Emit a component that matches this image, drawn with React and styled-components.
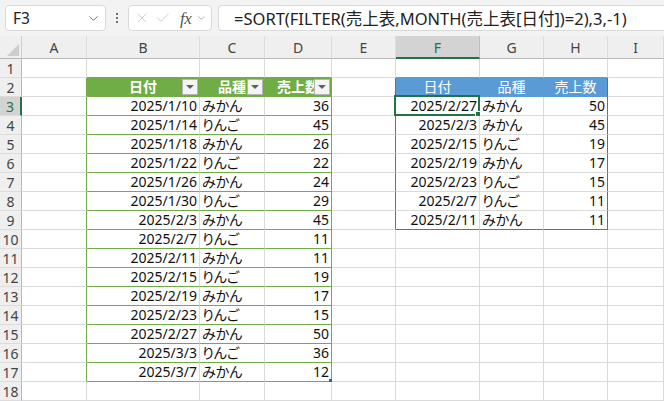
import { Fragment } from "react";
import styled, { createGlobalStyle } from "styled-components";
import { ChevronDown, X, Check } from "lucide-react";

const GlobalStyle = createGlobalStyle`
  html, body {
    margin: 0;
    padding: 0;
    background: #ffffff;
    overflow: hidden;
  }
  body {
    font-family: "Noto Sans", "Noto Sans CJK JP", sans-serif;
  }
`;

const GREEN = "#70ad47";
const BLUE = "#5b9bd5";
const BLUE_LINE = "#3a74d6";
const GRID = "#dadada";
const ACTIVE = "#217346";

const COLS = ["A", "B", "C", "D", "E", "F", "G", "H", "I"];
const COL_WIDTHS = "22px 65px 113px 65px 67px 64px 84px 64px 64px 1fr";

const sales = [
  ["2025/1/10", "みかん", 36],
  ["2025/1/14", "りんご", 45],
  ["2025/1/18", "みかん", 26],
  ["2025/1/22", "りんご", 22],
  ["2025/1/26", "みかん", 24],
  ["2025/1/30", "りんご", 29],
  ["2025/2/3", "みかん", 45],
  ["2025/2/7", "りんご", 11],
  ["2025/2/11", "みかん", 11],
  ["2025/2/15", "りんご", 19],
  ["2025/2/19", "みかん", 17],
  ["2025/2/23", "りんご", 15],
  ["2025/2/27", "みかん", 50],
  ["2025/3/3", "りんご", 36],
  ["2025/3/7", "みかん", 12],
];

const filtered = [
  ["2025/2/27", "みかん", 50],
  ["2025/2/3", "みかん", 45],
  ["2025/2/15", "りんご", 19],
  ["2025/2/19", "みかん", 17],
  ["2025/2/23", "りんご", 15],
  ["2025/2/7", "りんご", 11],
  ["2025/2/11", "みかん", 11],
];

const headers = ["日付", "品種", "売上数"];

// Styling
const Page = styled.div`
  width: 664px;
  height: 401px;
  display: flex;
  flex-direction: column;
  background: #ffffff;
`;

const FormulaBar = styled.div`
  height: 36px;
  flex-shrink: 0;
  display: flex;
  align-items: center;
  padding: 0 0 0 5px;
  background: #f3f3f3;
  box-sizing: border-box;
`;

const NameBox = styled.div`
  width: 101px;
  height: 26px;
  box-sizing: border-box;
  border: 1px solid #d9d9d9;
  border-radius: 4px;
  background: #ffffff;
  display: flex;
  align-items: center;
  justify-content: space-between;
  padding: 0 4px 0 7px;
  font-size: 15.5px;
  color: #222;
`;

const Dots = styled.div`
  width: 22px;
  display: flex;
  flex-direction: column;
  align-items: center;
  gap: 2px;

  span {
    width: 2px;
    height: 2px;
    background: #444;
    border-radius: 1px;
  }
`;

const IconBox = styled.div`
  width: 84px;
  height: 26px;
  box-sizing: border-box;
  border: 1px solid #d9d9d9;
  border-radius: 4px;
  background: #ffffff;
  display: flex;
  align-items: center;
  padding: 0 4px 0 5px;
  gap: 5px;
`;

const Fx = styled.span`
  font-family: "Liberation Serif", "DejaVu Serif", serif;
  font-style: italic;
  font-size: 17px;
  color: #555;
  letter-spacing: -0.5px;
  margin-left: 4px;
  line-height: 1;
`;

const FormulaInput = styled.div`
  flex: 1;
  height: 26px;
  margin-left: 6px;
  box-sizing: border-box;
  border: 1px solid #d9d9d9;
  border-right: none;
  border-radius: 4px 0 0 4px;
  background: #ffffff;
  display: flex;
  align-items: center;
  padding-left: 15px;
  font-size: 16.5px;
  color: #222;
  white-space: nowrap;
  overflow: hidden;
`;

const Sheet = styled.div`
  display: grid;
  grid-template-columns: ${COL_WIDTHS};
  grid-template-rows: 23px repeat(18, 19px);
  overflow: hidden;
`;

const Corner = styled.div`
  background: #efefef;
  border-right: 1px solid #cfcfcf;
  border-bottom: 1px solid #b8b8b8;
  display: flex;
  align-items: flex-end;
  justify-content: flex-end;
  padding: 0 2px 2px 0;
  box-sizing: border-box;
`;

const ColHeader = styled.div`
  background: ${(p) => (p.$active ? "#d3d3d3" : "#efefef")};
  border-right: 1px solid ${(p) => (p.$active ? "#bdbdbd" : "#dcdcdc")};
  border-bottom: ${(p) => (p.$active ? `2px solid ${ACTIVE}` : "1px solid #b8b8b8")};
  box-sizing: border-box;
  display: flex;
  align-items: center;
  justify-content: center;
  font-size: 14px;
  color: ${(p) => (p.$active ? "#217346" : "#444")};
  padding-top: ${(p) => (p.$active ? "1px" : "0")};
`;

const RowHeader = styled.div`
  background: ${(p) => (p.$active ? "#d3d3d3" : "#efefef")};
  border-right: ${(p) => (p.$active ? `2px solid ${ACTIVE}` : "1px solid #b8b8b8")};
  border-bottom: 1px solid #dcdcdc;
  box-sizing: border-box;
  display: flex;
  align-items: center;
  justify-content: center;
  font-size: 14px;
  color: ${(p) => (p.$active ? "#217346" : "#444")};
`;

const Cell = styled.div`
  position: relative;
  box-sizing: border-box;
  background: ${(p) => p.$bg || "#ffffff"};
  border-right: 1px solid ${(p) => p.$right || GRID};
  border-bottom: 1px solid ${(p) => p.$bottom || GRID};
  display: flex;
  align-items: center;
  justify-content: ${(p) =>
    p.$align === "right" ? "flex-end" : p.$align === "center" ? "center" : "flex-start"};
  padding: 0 2px 0 2px;
  font-size: 14px;
  font-weight: ${(p) => (p.$bold ? 700 : 400)};
  color: ${(p) => p.$color || "#111"};
  font-feature-settings: "palt";
  white-space: nowrap;
  overflow: visible;
  line-height: 1;
`;

const FilterButton = styled.div`
  position: absolute;
  right: 1px;
  top: 1px;
  width: 16px;
  height: 16px;
  box-sizing: border-box;
  background: #f4f4f4;
  border: 1px solid #b4b4b4;
  display: flex;
  align-items: center;
  justify-content: center;

  &::after {
    content: "";
    border-left: 4px solid transparent;
    border-right: 4px solid transparent;
    border-top: 4px solid #606060;
  }
`;

const ActiveFrame = styled.div`
  position: absolute;
  left: -2px;
  top: -2px;
  right: -1px;
  bottom: -1px;
  border: 2px solid ${ACTIVE};
  pointer-events: none;

  &::after {
    content: "";
    position: absolute;
    right: -5px;
    bottom: -5px;
    width: 6px;
    height: 6px;
    background: ${ACTIVE};
    border: 1px solid #ffffff;
  }
`;

const ResizeHandle = styled.div`
  position: absolute;
  right: -2px;
  bottom: -2px;
  width: 4px;
  height: 4px;
  background: #2f5faa;
`;

function cellProps(r, c) {
  // c: 0..8 => A..I, r: 1..18
  const props = { text: "", align: "left" };
  const inGreen = c >= 1 && c <= 3 && r >= 2 && r <= 17;
  const inBlue = c >= 5 && c <= 7 && r >= 2 && r <= 9;

  // bottom borders
  if (c >= 1 && c <= 3 && r >= 1 && r <= 17) props.bottom = GREEN;
  if (c >= 5 && c <= 7 && (r === 1 || r === 2)) props.bottom = BLUE;
  if (c >= 5 && c <= 7 && r === 9) props.bottom = BLUE_LINE;

  // right borders
  if (r >= 2 && r <= 17 && (c === 0 || c === 3)) props.right = GREEN;
  if (r >= 2 && r <= 9 && (c === 4 || c === 7)) props.right = BLUE_LINE;

  if (inGreen) {
    const k = c - 1;
    if (r === 2) {
      props.text = headers[k];
      props.bg = GREEN;
      props.color = "#ffffff";
      props.bold = true;
      props.align = "center";
      props.filter = true;
      if (c < 3) props.right = GREEN;
    } else {
      const row = sales[r - 3];
      props.text = String(row[k]);
      props.align = k === 1 ? "left" : "right";
    }
  }

  if (inBlue) {
    const k = c - 5;
    if (r === 2) {
      props.text = headers[k];
      props.bg = BLUE;
      props.color = "#ffffff";
      props.align = "center";
      if (c < 7) props.right = BLUE;
    } else {
      const row = filtered[r - 3];
      props.text = String(row[k]);
      props.align = k === 1 ? "left" : "right";
    }
  }

  if (r === 3 && c === 5) props.active = true;
  if (r === 17 && c === 3) props.handle = true;
  return props;
}

const rows = Array.from({ length: 18 }, (_, i) => i + 1);

export default function App() {
  return (
    <>
      <GlobalStyle />
      <Page>
        <FormulaBar>
          <NameBox>
            <span>F3</span>
            <ChevronDown size={15} color="#666" strokeWidth={1.5} />
          </NameBox>
          <Dots>
            <span />
            <span />
            <span />
          </Dots>
          <IconBox>
            <X size={18} color="#c4c4c4" strokeWidth={1.2} />
            <Check size={18} color="#c4c4c4" strokeWidth={1.2} />
            <Fx>fx</Fx>
            <ChevronDown size={12} color="#888" strokeWidth={1.5} />
          </IconBox>
          <FormulaInput>=SORT(FILTER(売上表,MONTH(売上表[日付])=2),3,-1)</FormulaInput>
        </FormulaBar>

        <Sheet>
          <Corner>
            <svg width="12" height="12" viewBox="0 0 12 12">
              <polygon points="12,0 12,12 0,12" fill="#cdcdcd" />
            </svg>
          </Corner>
          {COLS.map((col, i) => (
            <ColHeader key={col} $active={i === 5}>
              {col}
            </ColHeader>
          ))}

          {rows.map((r) => (
            <Fragment key={r}>
              <RowHeader $active={r === 3}>{r}</RowHeader>
              {COLS.map((col, c) => {
                const p = cellProps(r, c);
                return (
                  <Cell
                    key={`${col}${r}`}
                    $bg={p.bg}
                    $color={p.color}
                    $bold={p.bold}
                    $align={p.align}
                    $right={p.right}
                    $bottom={p.bottom}
                  >
                    {p.text}
                    {p.filter && <FilterButton />}
                    {p.active && <ActiveFrame />}
                    {p.handle && <ResizeHandle />}
                  </Cell>
                );
              })}
            </Fragment>
          ))}
        </Sheet>
      </Page>
    </>
  );
}
